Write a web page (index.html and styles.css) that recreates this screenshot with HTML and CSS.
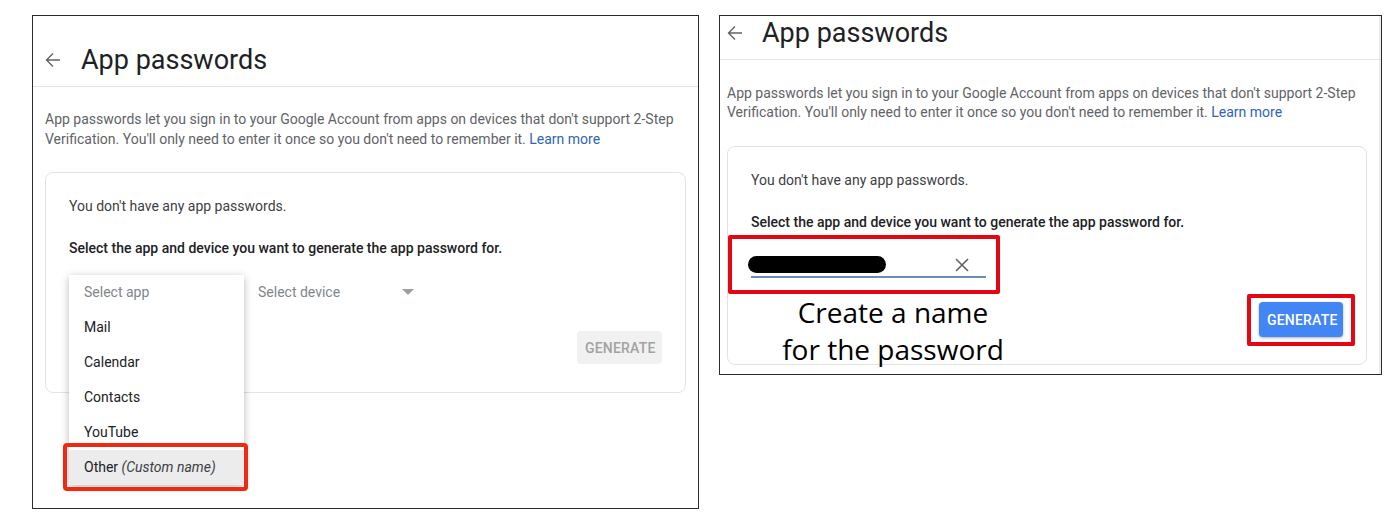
FILE: index.html
```html
<!DOCTYPE html>
<html lang="en">
<head>
<meta charset="utf-8">
<title>App passwords</title>
<link rel="stylesheet" href="styles.css">
</head>
<body>
<div class="shots">

  <!-- step 1: pick "Other" from the app list -->
  <section class="panel panel-left">
    <header class="bar">
      <svg class="back" viewBox="0 0 16 16"><path d="M15 8H1.5M8 1.5L1.5 8 8 14.5"/></svg>
      <h1>App passwords</h1>
    </header>
    <p class="intro">App passwords let you sign in to your Google Account from apps on devices that don't support 2-Step<br>Verification. You'll only need to enter it once so you don't need to remember it. <a href="javascript:;">Learn more</a></p>
    <div class="card">
      <p class="none">You don't have any app passwords.</p>
      <p class="lead">Select the app and device you want to generate the app password for.</p>
      <div class="pickers">
        <div class="picker picker-app">Select app</div>
        <div class="picker picker-device">Select device <span class="caret"></span></div>
        <ul class="menu">
          <li class="hint">Select app</li>
          <li>Mail</li>
          <li>Calendar</li>
          <li>Contacts</li>
          <li>YouTube</li>
          <li class="active">Other <i>(Custom name)</i></li>
        </ul>
        <div class="mark mark-other"></div>
      </div>
      <div class="actions">
        <button class="gen gen-off" disabled>GENERATE</button>
      </div>
    </div>
  </section>

  <!-- step 2: type a name and generate -->
  <section class="panel panel-right">
    <header class="bar">
      <svg class="back" viewBox="0 0 16 16"><path d="M15 8H1.5M8 1.5L1.5 8 8 14.5"/></svg>
      <h1>App passwords</h1>
    </header>
    <p class="intro">App passwords let you sign in to your Google Account from apps on devices that don't support 2-Step<br>Verification. You'll only need to enter it once so you don't need to remember it. <a href="javascript:;">Learn more</a></p>
    <div class="card">
      <p class="none">You don't have any app passwords.</p>
      <p class="lead">Select the app and device you want to generate the app password for.</p>
      <div class="field">
        <span class="blot"></span>
        <svg class="clear" viewBox="0 0 14 14"><path d="M1 1L13 13M13 1L1 13"/></svg>
        <div class="mark mark-field"></div>
      </div>
      <div class="actions actions-right">
        <div class="gen-wrap">
          <button class="gen gen-on">GENERATE</button>
          <div class="mark mark-gen"></div>
        </div>
      </div>
      <div class="note">Create a name<br>for the password</div>
    </div>
  </section>

</div>
</body>
</html>
```

FILE: styles.css
```css
body { margin: 0; background: #fff; font: 14px Roboto, "Liberation Sans", Arial, sans-serif; color: #3c4043; }
p { margin: 0; }
ul { margin: 0; padding: 0; }
li { list-style: none; }

.shots { display: flex; align-items: flex-start; gap: 20px; padding: 15px 0 0 32px; }

.panel { border: 1px solid #2b2b2b; background: #fff; box-sizing: border-box; }
.panel-left { width: 667px; height: 494px; }
.panel-right { width: 663px; height: 360px; box-shadow: inset -2px 0 0 #ececec; }

/* header */
.bar { display: flex; align-items: center; gap: 20px; border-bottom: 1px solid #e4e4e4; }
.panel-left .bar { padding: 28px 0 10px 12px; }
.panel-right .bar { padding: 1px 0 10px 7px; gap: 19px; }
.back { width: 16px; height: 16px; fill: none; stroke: #5f6368; stroke-width: 1.4; }
.bar h1 { margin: 0; font: 400 27px/32px Roboto, "Liberation Sans", sans-serif; color: #202124; }

.intro { color: #5f6368; font-size: 14px; }
.panel-left .intro { margin: 22px 12px 0; line-height: 20px; }
.panel-right .intro { margin: 24px 7px 0; line-height: 19px; }
.intro a { color: #2f64b5; text-decoration: none; }

/* card */
.card { border: 1px solid #e2e3e5; border-radius: 8px; position: relative; }
.panel-left .card { margin: 23px 12px 0; padding: 23px 23px 28px; }
.panel-right .card { margin: 24px 14px 0 7px; padding: 23px 23px 27px; }
.card p { line-height: 20px; }
.none { color: #3c4043; }
.lead { margin-top: 22px !important; color: #202124; font-weight: 500; }

/* pickers + open list */
.pickers { display: flex; gap: 14px; margin-top: 18px; height: 32px; position: relative; }
.picker { height: 32px; line-height: 32px; color: #80868b; }
.picker-app { width: 160px; padding-left: 15px; }
.picker-device { width: 160px; display: flex; align-items: center; justify-content: space-between; }
.caret { width: 0; height: 0; border-left: 6px solid transparent; border-right: 6px solid transparent; border-top: 6px solid #9aa0a6; margin-right: 4px; }

.menu { position: absolute; left: 0; top: -1px; width: 175px; background: #fff; box-shadow: 0 2px 8px rgba(0,0,0,.28); z-index: 2; }
.menu li { height: 35px; line-height: 35px; padding-left: 15px; color: #202124; }
.menu .hint { color: #80868b; }
.menu .active { background: #ececec; }
.menu i { color: #3c4043; }

.actions { display: flex; justify-content: flex-end; margin-top: 23px; }
.actions-right { margin-top: 24px; }
.gen { font: 500 14px Roboto, "Liberation Sans", sans-serif; letter-spacing: .2px; border: 0; border-radius: 4px; padding: 0 8px; }
.gen-off { height: 33px; width: 85px; background: #f1f1f1; color: #a2a2a2; }
.gen-on { height: 35px; width: 84px; background: #4285f4; color: #fff; box-shadow: 0 1px 3px rgba(0,0,0,.3); }
.gen-wrap { position: relative; display: flex; }

/* name field */
.field { position: relative; width: 235px; height: 30px; margin-top: 14px; border-bottom: 2px solid #6a8db4; }
.blot { position: absolute; left: -3px; top: 10px; width: 138px; height: 17px; background: #000; border-radius: 9px; }
.clear { position: absolute; right: 17px; top: 12px; width: 14px; height: 14px; fill: none; stroke: #5f6368; stroke-width: 1.6; }

/* red call-out boxes */
.mark { position: absolute; box-sizing: border-box; border: 4px solid #e30613; border-radius: 2px; z-index: 3; }
.mark-other { left: -6px; top: 167px; width: 185px; height: 48px; border-color: #f02a12; border-radius: 4px; }
.mark-field { left: -23px; top: -11px; width: 272px; height: 59px; }
.mark-gen { left: -12px; top: -8px; width: 108px; height: 52px; }

.note { position: absolute; left: 35px; top: 147px; width: 260px; text-align: center; font: 400 28px/37px "Open Sans", "Noto Sans", sans-serif; color: #000; }
```
